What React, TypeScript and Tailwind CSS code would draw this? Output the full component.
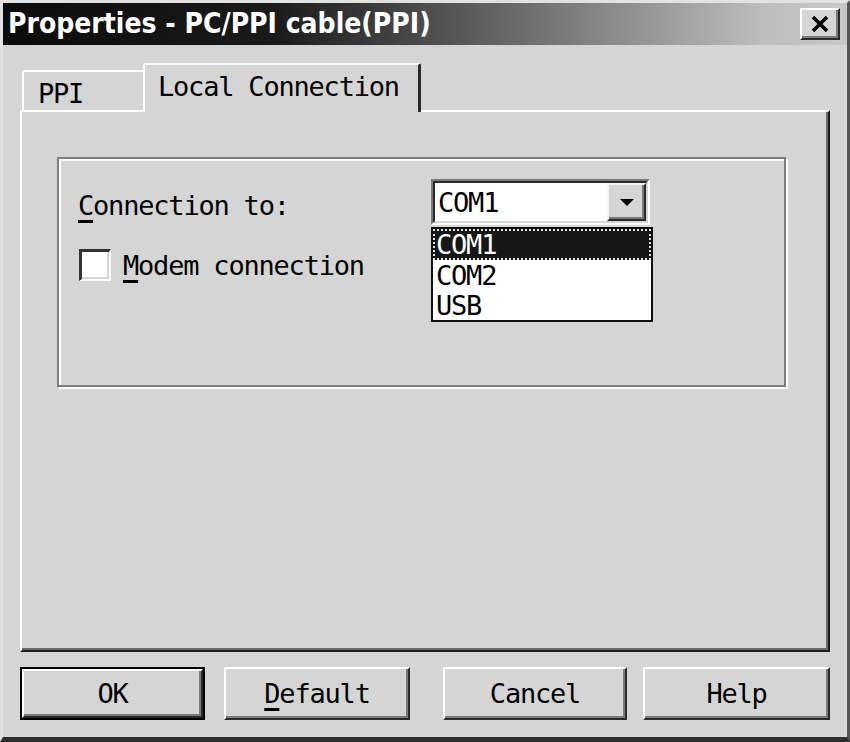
const mono = "font-['DejaVu_Sans_Mono','Liberation_Mono',monospace] text-[27px] tracking-[-1.2px] leading-none text-black";

function Raised({ width, isDefault, children }: { width: number; isDefault?: boolean; children: React.ReactNode }) {
  const inner = (
    <div className="h-full w-full border-2 border-t-white border-l-white border-r-[#2a2a2a] border-b-[#2a2a2a] shadow-[inset_-2px_-2px_0_#7a7a7a] flex items-center justify-center">
      {children}
    </div>
  );
  return (
    <button
      style={{ width }}
      className={`h-[53px] shrink-0 bg-[#d5d5d5] ${isDefault ? "border-2 border-black" : ""}`}
    >
      {inner}
    </button>
  );
}

function U({ children }: { children: React.ReactNode }) {
  return <span className="underline decoration-[3px] underline-offset-[5px]">{children}</span>;
}

export default function App() {
  return (
    <div className="w-[850px] h-[742px] bg-[#d5d5d5] border-t-[3px] border-l-[3px] border-r-[3px] border-b-[5px] border-t-[#e2e2e2] border-l-[#e2e2e2] border-r-[#555] border-b-[#2e2e2e] flex flex-col overflow-hidden">
      {/* Title bar */}
      <div className="h-[42px] shrink-0 flex items-center justify-between pl-[5px] pr-[7px] bg-[linear-gradient(to_right,#0c0c0c_0%,#1a1a1a_32%,#6e6e6e_62%,#bdbdbd_90%,#c8c8c8_100%)]">
        <span className="font-['DejaVu_Sans_Condensed','DejaVu_Sans',sans-serif] font-bold text-[28px] text-white leading-none">
          Properties - PC/PPI cable(PPI)
        </span>
        <div className="w-[40px] h-[32px] bg-[#d5d5d5] border-2 border-t-white border-l-white border-r-[#2a2a2a] border-b-[#2a2a2a] shadow-[inset_-2px_-2px_0_#7a7a7a] flex items-center justify-center">
          <svg width="18" height="16" viewBox="0 0 18 16">
            <path d="M2 1 L16 15 M16 1 L2 15" stroke="#000" strokeWidth="3.5" />
          </svg>
        </div>
      </div>

      {/* Tabs */}
      <div className="mt-[18px] h-[47px] shrink-0 flex items-end pl-[19px]">
        <div className="w-[121px] h-[40px] border-l-2 border-t-2 border-white rounded-tl-[3px] pl-[14px] pt-[8px]">
          <span className={mono}>PPI</span>
        </div>
        <div className="relative z-10 -mb-[2px] w-[278px] h-[49px] bg-[#d5d5d5] border-l-2 border-t-2 border-r-[3px] border-l-white border-t-white border-r-[#2a2a2a] rounded-tl-[3px] rounded-tr-[2px] pl-[13px] pt-[8px]">
          <span className={mono}>Local Connection</span>
        </div>
      </div>

      {/* Tab panel */}
      <div className="mx-[17px] h-[542px] shrink-0 border-2 border-t-white border-l-white border-r-[#1e1e1e] border-b-[#1e1e1e] shadow-[inset_-2px_-2px_0_#6a6a6a] pl-[35px] pt-[45px]">
        <div className="w-[729px] h-[230px] border-2 border-[#7c7c7c] shadow-[inset_2px_2px_0_#fff,2px_2px_0_#fff] pt-[20px] pl-[19px]">
          <div className="flex items-center">
            <div className="w-[353px] pt-[8px]">
              <span className={mono}>
                <U>C</U>onnection to:
              </span>
            </div>
            <div className="relative">
              <div className="w-[219px] h-[46px] border-2 border-t-[#7a7a7a] border-l-[#7a7a7a] border-r-white border-b-white">
                <div className="h-full w-full border-2 border-t-[#2a2a2a] border-l-[#2a2a2a] border-r-[#d5d5d5] border-b-[#d5d5d5] bg-white flex items-center justify-between">
                  <span className={`${mono} pl-[3px] text-[26px]`}>COM1</span>
                  <div className="w-[39px] h-full bg-[#d5d5d5] border-2 border-t-[#f2f2f2] border-l-[#f2f2f2] border-r-[#2a2a2a] border-b-[#2a2a2a] shadow-[inset_-2px_-2px_0_#7a7a7a] flex items-center justify-center">
                    <svg width="16" height="9" viewBox="0 0 16 9">
                      <polygon points="1,1 15,1 8,8" fill="#000" />
                    </svg>
                  </div>
                </div>
              </div>
              {/* Dropdown list */}
              <div className="absolute left-0 top-[48px] w-[222px] h-[95px] bg-white border-2 border-[#111] flex flex-col">
                <div className="h-[31px] bg-[#161616] outline-dotted outline-2 outline-[#e0e0e0] -outline-offset-2 flex items-center pl-[3px]">
                  <span className={`${mono} text-[26px] text-white`}>COM1</span>
                </div>
                <div className="h-[30px] flex items-center pl-[3px]">
                  <span className={`${mono} text-[26px]`}>COM2</span>
                </div>
                <div className="h-[30px] flex items-center pl-[3px]">
                  <span className={`${mono} text-[26px]`}>USB</span>
                </div>
              </div>
            </div>
          </div>

          <div className="mt-[24px] ml-px flex items-center">
            <div className="w-[32px] h-[32px] bg-white border-t-[3px] border-l-[3px] border-r-2 border-b-2 border-t-[#333] border-l-[#333] border-r-white border-b-white shadow-[inset_-2px_-2px_0_#d5d5d5]" />
            <span className={`${mono} ml-[12px]`}>
              <U>M</U>odem connection
            </span>
          </div>
        </div>
      </div>

      {/* Buttons */}
      <div className="mt-[15px] flex pl-[17px]">
        <Raised width={185} isDefault>
          <span className={mono}>OK</span>
        </Raised>
        <div className="ml-[19px]">
          <Raised width={186}>
            <span className={mono}>
              <U>D</U>efault
            </span>
          </Raised>
        </div>
        <div className="ml-[33px]">
          <Raised width={184}>
            <span className={mono}>Cancel</span>
          </Raised>
        </div>
        <div className="ml-[16px]">
          <Raised width={187}>
            <span className={mono}>Help</span>
          </Raised>
        </div>
      </div>
    </div>
  );
}
